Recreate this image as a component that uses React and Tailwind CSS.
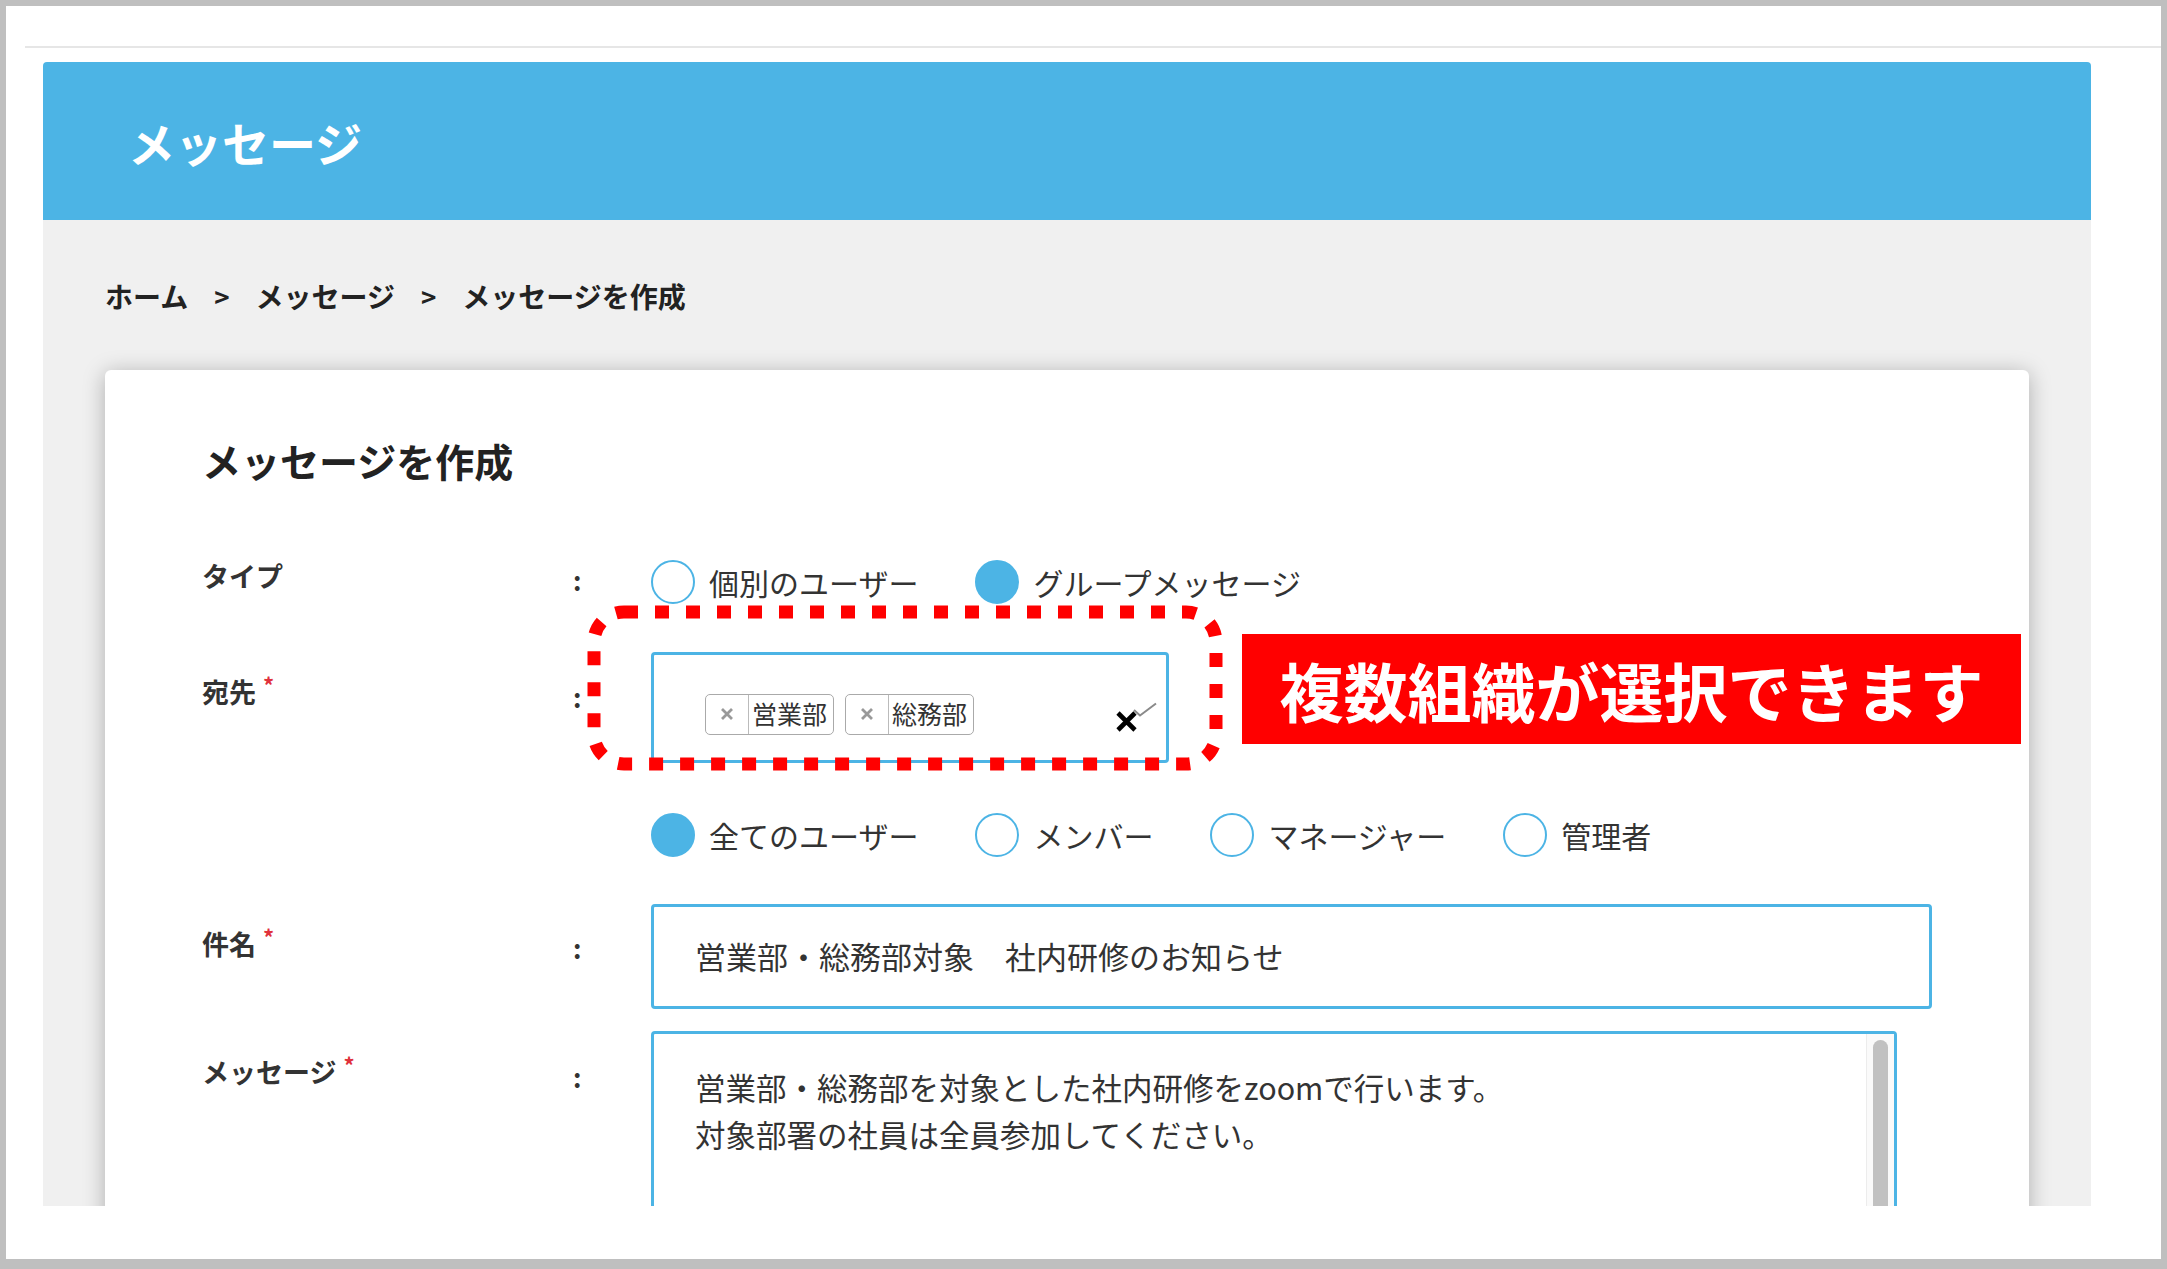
import React from 'react';

const Radio = ({ label, checked }) => (
    <div className="flex items-center gap-[14px]">
        <span className={`w-[44px] h-[44px] rounded-full border-2 border-[#4cb4e5] ${checked ? 'bg-[#4cb4e5]' : 'bg-white'}`} />
        <span className="text-[30px] leading-[44px] text-[#333]">{label}</span>
    </div>
);

const Label = ({ text, required, pt }) => (
    <div className={`w-[371px] flex-none text-[27px] leading-[36px] font-bold text-[#333] ${pt}`}>
        {text}
        {required && <span className="ml-[7px] text-[22px] font-bold text-[#e0313b] relative -top-[9px]">*</span>}
    </div>
);

const Colon = ({ pt }) => (
    <div className={`w-[78px] flex-none text-[26px] leading-[36px] font-bold text-[#333] ${pt}`}>:</div>
);

const Tag = ({ text }) => (
    <div className="h-[41px] flex items-stretch border border-[#aaa] rounded-[5px] bg-white">
        <div className="w-[43px] flex items-center justify-center border-r border-[#bbb]">
            <svg width="14" height="14" viewBox="0 0 14 14">
                <path d="M2 2 L12 12 M12 2 L2 12" stroke="#999" strokeWidth="2.8" />
            </svg>
        </div>
        <div className="pl-[3px] pr-[6px] flex items-center text-[25px] text-[#333]">{text}</div>
    </div>
);

export default function App() {
    return (
        <div className="w-[2167px] h-[1269px] bg-white border-[6px] border-b-[10px] border-[#bfbfbf] overflow-hidden font-['Noto_Sans_CJK_JP','Noto_Sans',sans-serif]">
            {/* browser chrome edge */}
            <div className="h-[40px]" />
            <div className="ml-[19px] h-[2px] bg-[#e6e6e6]" />

            <div className="ml-[37px] mt-[14px] w-[2048px]">
                {/* header */}
                <div className="h-[158px] rounded-t-[4px] bg-[#4cb4e5] flex items-center pl-[85px]">
                    <h1 className="text-[47px] leading-none font-bold text-white">メッセージ</h1>
                </div>

                {/* grey page body */}
                <div className="h-[986px] bg-[#f0f0f0] overflow-hidden pt-[58px] px-[62px]">
                    <div className="flex items-center gap-[26px] text-[28px] leading-[36px] font-bold text-[#222]">
                        <span>ホーム</span>
                        <span className="text-[26px]">&gt;</span>
                        <span>メッセージ</span>
                        <span className="text-[26px]">&gt;</span>
                        <span>メッセージを作成</span>
                    </div>

                    {/* card */}
                    <div className="mt-[56px] h-[900px] bg-white rounded-[6px] shadow-[0_3px_22px_rgba(0,0,0,0.28)] pl-[97px] pt-[66px]">
                        <h2 className="text-[39px] leading-[48px] font-bold text-[#222]">メッセージを作成</h2>

                        {/* type */}
                        <div className="mt-[76px] flex items-start">
                            <Label text="タイプ" pt="-mt-[2px]" />
                            <Colon pt="pt-[2px]" />
                            <div className="flex items-center gap-[57px]">
                                <Radio label="個別のユーザー" />
                                <Radio label="グループメッセージ" checked />
                            </div>
                        </div>

                        {/* destination */}
                        <div className="mt-[48px] flex items-start relative">
                            <Label text="宛先" required pt="pt-[22px]" />
                            <Colon pt="pt-[27px]" />
                            <div className="relative">
                                <div className="w-[518px] h-[111px] border-[3px] border-[#4cb4e5] rounded-[4px] bg-white relative flex items-center gap-[11px] pl-[51px] pt-[13px]">
                                    <Tag text="営業部" />
                                    <Tag text="総務部" />
                                    <svg className="absolute left-[478px] top-[47px]" width="26" height="15" viewBox="0 0 26 15">
                                        <path d="M2 8 L8 13.5 L24 1.5" fill="none" stroke="#8a8a8a" strokeWidth="2" />
                                    </svg>
                                    <svg className="absolute left-[461px] top-[55px]" width="23" height="23" viewBox="0 0 23 23">
                                        <path d="M3 3 L20 20 M20 3 L3 20" stroke="#000" strokeWidth="4.6" />
                                    </svg>
                                </div>

                                {/* annotation: dotted frame */}
                                <svg className="absolute -left-[64px] -top-[47px] pointer-events-none" width="636" height="166" viewBox="0 0 636 166">
                                    <rect x="7" y="7" width="622" height="152" rx="30" ry="30" fill="none" stroke="#ff0000" strokeWidth="13" strokeDasharray="14 17" />
                                </svg>

                                {/* annotation: callout */}
                                <div className="absolute left-[591px] -top-[18px] w-[779px] h-[110px] bg-[#ff0000] flex items-center justify-center">
                                    <span className="text-[64px] leading-none font-bold text-white whitespace-nowrap">複数組織が選択できます</span>
                                </div>
                            </div>
                        </div>

                        {/* role */}
                        <div className="mt-[50px] flex items-start">
                            <div className="w-[449px] flex-none" />
                            <div className="flex items-center gap-[57px]">
                                <Radio label="全てのユーザー" checked />
                                <Radio label="メンバー" />
                                <Radio label="マネージャー" />
                                <Radio label="管理者" />
                            </div>
                        </div>

                        {/* subject */}
                        <div className="mt-[47px] flex items-start">
                            <Label text="件名" required pt="pt-[22px]" />
                            <Colon pt="pt-[26px]" />
                            <div className="w-[1281px] h-[105px] border-[3px] border-[#4cb4e5] rounded-[4px] flex items-center pl-[41px] text-[31px] text-[#333]">
                                営業部・総務部対象　社内研修のお知らせ
                            </div>
                        </div>

                        {/* message */}
                        <div className="mt-[22px] flex items-start">
                            <Label text="メッセージ" required pt="pt-[23px]" />
                            <Colon pt="pt-[28px]" />
                            <div className="w-[1246px] h-[320px] border-[3px] border-[#4cb4e5] rounded-[4px] relative pl-[41px] pt-[30px] text-[30.5px] leading-[47px] text-[#333]">
                                <p>営業部・総務部を対象とした社内研修をzoomで行います。</p>
                                <p>対象部署の社員は全員参加してください。</p>
                                <div className="absolute right-0 top-0 bottom-0 w-[28px] border-l border-[#ececec] bg-[#fafafa]">
                                    <div className="absolute top-[6px] left-[6px] w-[15px] h-[400px] rounded-full bg-[#c1c1c1]" />
                                </div>
                            </div>
                        </div>
                    </div>
                </div>
            </div>
        </div>
    );
}
